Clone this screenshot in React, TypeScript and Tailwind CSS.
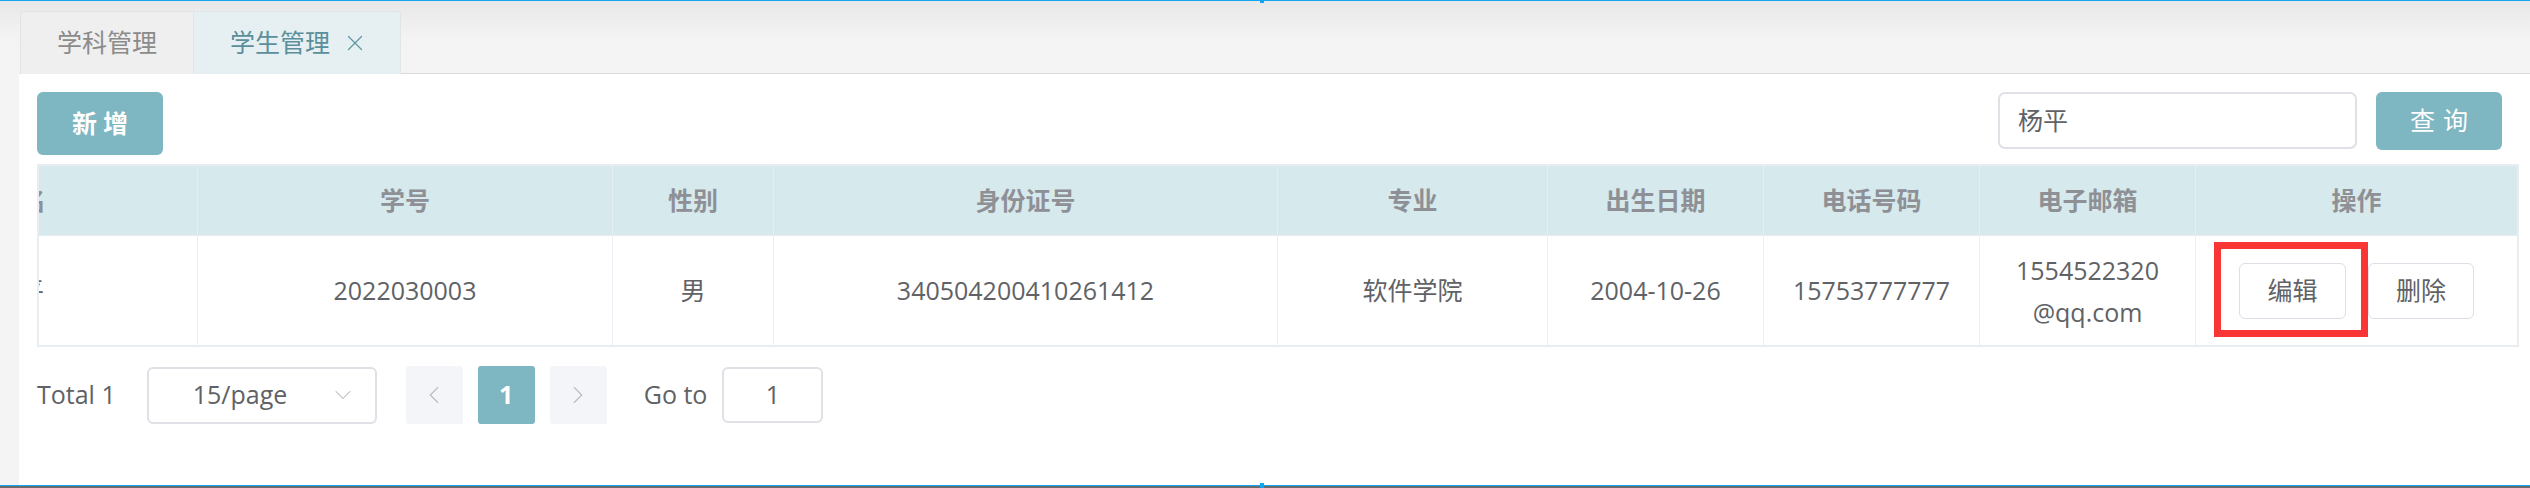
import { ChevronDown, ChevronLeft, ChevronRight, X } from 'lucide-react';

const font = { fontFamily: '"Open Sans", "Noto Sans CJK SC", sans-serif' };

const headers = ['学号', '性别', '身份证号', '专业', '出生日期', '电话号码', '电子邮箱', '操作'];

function Tabs() {
  return (
    <div className="h-[73px] flex items-end pl-[20px] bg-gradient-to-b from-[#e8e8e8] via-[#f3f3f3] to-[#f4f4f4]">
      <div className="h-[63px] w-[173px] flex items-center justify-center bg-[#efefef] border-t border-l border-[#e2e2e2] rounded-tl-[4px] text-[25px] text-[#8b8b8b]">
        学科管理
      </div>
      <div className="h-[63px] w-[208px] flex items-center pl-[36px] gap-[12px] bg-[#e6eff2] border-t border-r border-l border-[#e0e6e8] rounded-tr-[4px] text-[25px] text-[#5b8f9b]">
        <span>学生管理</span>
        <X size={26} strokeWidth={1.1} className="text-[#5f97a3]" />
      </div>
      <div className="flex-1 h-full border-b border-[#dcdcdc]"></div>
    </div>
  );
}

function Toolbar() {
  return (
    <div className="flex items-start justify-between pr-[17px]">
      <button className="h-[63px] w-[126px] rounded-[6px] bg-[#7eb6c1] text-white text-[25px] font-bold tracking-[6px] pl-[6px]">
        新增
      </button>
      <div className="flex items-start gap-[19px]">
        <div className="h-[57px] w-[359px] border-2 border-[#dfe1e6] rounded-[7px] flex items-center px-[18px] text-[25px] text-[#606266]">
          杨平
        </div>
        <button className="h-[58px] w-[126px] rounded-[6px] bg-[#7eb6c1] text-white text-[25px] tracking-[8px] pl-[8px]">
          查询
        </button>
      </div>
    </div>
  );
}

function StudentTable() {
  const cols = 'grid grid-cols-[158px_415px_161px_504px_270px_216px_216px_216px_322px]';
  return (
    <div className="mt-[9px] border-2 border-[#e8edf2] w-[2482px]">
      <div className={`${cols} h-[70px] bg-[#d6e9ed] border-b border-[#e3ecef]`}>
        <div className="overflow-hidden flex items-center">
          <span className="ml-[-43px] text-[25px] font-bold text-[#8e9096] whitespace-nowrap">姓名</span>
        </div>
        {headers.map((h) => (
          <div key={h} className="border-l border-[#e6eef1] flex items-center justify-center text-[25px] font-bold text-[#8e9096]">
            {h}
          </div>
        ))}
      </div>
      <div className={`${cols} h-[109px] text-[25px] text-[#606266]`}>
        <div className="overflow-hidden flex items-center">
          <span className="ml-[-45px] whitespace-nowrap">杨平</span>
        </div>
        <div className="border-l border-[#ebeef5] flex items-center justify-center">2022030003</div>
        <div className="border-l border-[#ebeef5] flex items-center justify-center">男</div>
        <div className="border-l border-[#ebeef5] flex items-center justify-center">340504200410261412</div>
        <div className="border-l border-[#ebeef5] flex items-center justify-center">软件学院</div>
        <div className="border-l border-[#ebeef5] flex items-center justify-center">2004-10-26</div>
        <div className="border-l border-[#ebeef5] flex items-center justify-center">15753777777</div>
        <div className="border-l border-[#ebeef5] flex flex-col items-center justify-center leading-[42px]">
          <span>1554522320</span>
          <span>@qq.com</span>
        </div>
        <div className="border-l border-[#ebeef5] flex items-center justify-center gap-[22px]">
          <div className="relative">
            <button className="h-[56px] w-[107px] border border-[#dcdfe6] rounded-[6px] bg-white">编辑</button>
            <div className="absolute left-[-25px] top-[-21px] w-[154px] h-[95px] border-[7px] border-[#f83636]"></div>
          </div>
          <button className="h-[56px] w-[106px] border border-[#dcdfe6] rounded-[6px] bg-white">删除</button>
        </div>
      </div>
    </div>
  );
}

function Pagination() {
  return (
    <div className="mt-[19px] flex items-center text-[25px] text-[#606266]">
      <span>Total 1</span>
      <div className="ml-[31px] h-[57px] w-[230px] border-2 border-[#dfe1e6] rounded-[6px] flex items-center pl-[44px] pr-[18px] justify-between">
        <span>15/page</span>
        <ChevronDown size={28} strokeWidth={0.9} className="text-[#b4b7bd]" />
      </div>
      <div className="ml-[29px] h-[58px] w-[57px] rounded-[3px] bg-[#f4f5f8] flex items-center justify-center">
        <ChevronLeft size={30} strokeWidth={0.9} className="text-[#b8bcc2]" />
      </div>
      <div className="ml-[15px] h-[58px] w-[57px] rounded-[3px] bg-[#7eb6c1] flex items-center justify-center text-white font-bold">
        1
      </div>
      <div className="ml-[15px] h-[58px] w-[57px] rounded-[3px] bg-[#f4f5f8] flex items-center justify-center">
        <ChevronRight size={30} strokeWidth={0.9} className="text-[#b8bcc2]" />
      </div>
      <span className="ml-[37px]">Go to</span>
      <div className="ml-[15px] h-[56px] w-[101px] border-2 border-[#dfe1e6] rounded-[6px] flex items-center justify-center">
        1
      </div>
    </div>
  );
}

export default function App() {
  return (
    <div className="relative w-[2530px] h-[488px] bg-[#f4f4f4] flex flex-col overflow-hidden" style={font}>
      <div className="h-[1px] bg-[#14a5f0]"></div>
      <Tabs />
      <div className="flex-1 flex">
        <div className="w-[19px]"></div>
        <div className="flex-1 bg-white pl-[18px] pr-[11px] pt-[18px]">
          <Toolbar />
          <StudentTable />
          <Pagination />
        </div>
      </div>
      <div className="h-[1px] bg-[#14a5f0]"></div>
      <div className="h-[2px] bg-[#6b6b6b]"></div>
      <div className="absolute left-[1260px] top-0 w-[4px] h-[3px] bg-[#14a5f0]"></div>
      <div className="absolute left-[1260px] bottom-0 w-[4px] h-[5px] bg-[#14a5f0]"></div>
    </div>
  );
}
